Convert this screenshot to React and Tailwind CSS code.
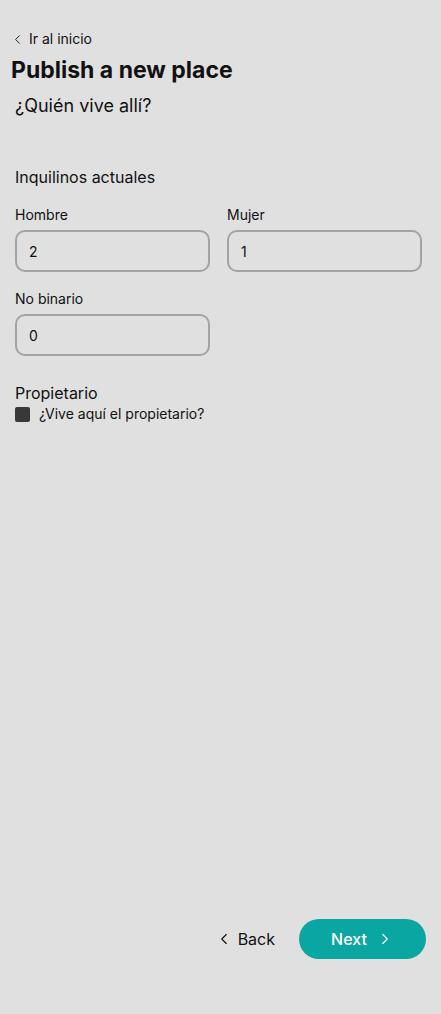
import { ChevronLeft, ChevronRight } from 'lucide-react';

function NumberField({ label, value }) {
  return (
    <div className="flex flex-col">
      <label className="mb-[5px] text-[14px] leading-[20px] text-[#111]">{label}</label>
      <input
        type="text"
        defaultValue={value}
        className="h-[42px] w-full rounded-[10px] border-2 border-[#a3a3a3] bg-transparent px-[12px] text-[14px] text-[#111] outline-none"
      />
    </div>
  );
}

export default function App() {
  return (
    <div
      className="flex h-[1014px] w-full flex-col bg-[#e0e0e0] text-[#111]"
      style={{ fontFamily: 'Inter, "Noto Sans", sans-serif' }}
    >
      <div className="flex-1 pl-[15px] pr-[19px] pt-[29px]">
        <a href="#" className="-ml-[5px] flex items-center gap-[4px] text-[14px] leading-[20px]">
          <ChevronLeft size={15} strokeWidth={1.5} />
          <span>Ir al inicio</span>
        </a>
        <h1 className="-ml-[4px] mt-[4px] text-[23px] font-bold leading-[34px]">Publish a new place</h1>
        <h2 className="mt-[6px] text-[18px] leading-[26px]">¿Quién vive allí?</h2>

        <h3 className="mt-[47px] text-[16px] leading-[22px]">Inquilinos actuales</h3>
        <div className="mt-[17px] grid grid-cols-2 gap-x-[17px] gap-y-[17px]">
          <NumberField label="Hombre" value="2" />
          <NumberField label="Mujer" value="1" />
          <NumberField label="No binario" value="0" />
        </div>

        <h3 className="mt-[26px] text-[16px] leading-[22px]">Propietario</h3>
        <label className="flex items-center gap-[9px] text-[14px] leading-[20px]">
          <span className="h-[15px] w-[15px] rounded-[2px] bg-[#383838]" />
          <span>¿Vive aquí el propietario?</span>
        </label>
      </div>

      <div className="flex items-center justify-end gap-[24px] pb-[55px] pr-[15px]">
        <button className="flex items-center gap-[5px] text-[16px] text-[#111]">
          <ChevronLeft size={18} strokeWidth={1.5} />
          <span>Back</span>
        </button>
        <button className="flex h-[40px] w-[127px] items-center justify-center gap-[9px] rounded-full bg-[#0aa6a2] text-[16px] font-medium text-white">
          <span>Next</span>
          <ChevronRight size={18} strokeWidth={1.5} />
        </button>
      </div>
    </div>
  );
}
